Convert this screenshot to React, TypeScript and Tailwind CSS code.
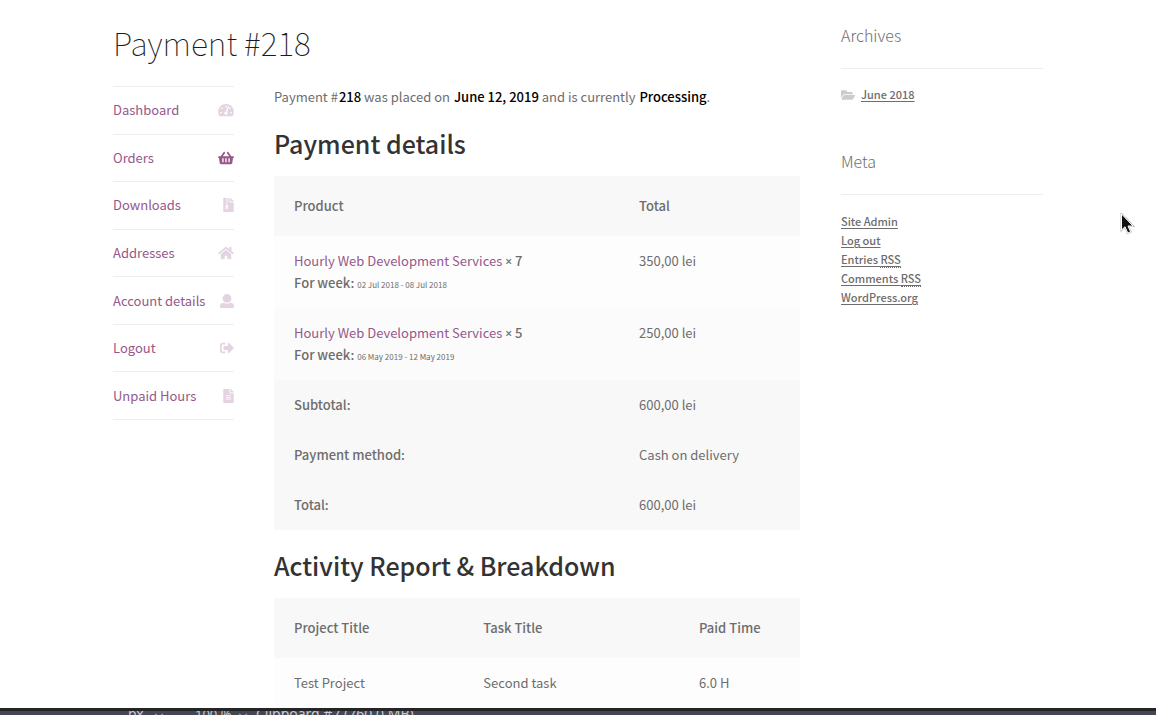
import type { ComponentType } from "react";
import { FaChevronDown, FaFileAlt, FaFileArchive, FaFolderOpen, FaHome, FaShoppingBasket, FaSignOutAlt, FaTachometerAlt } from "react-icons/fa";

function UserIcon({ className }: { className?: string }) {
  return (
    <svg className={className} viewBox="0 0 512 512" fill="currentColor" aria-hidden="true">
      <path d="M256 0c88.366 0 160 71.634 160 160s-71.634 160-160 160S96 248.366 96 160 167.634 0 256 0zm183.283 333.821l-71.313-17.828c-74.923 53.890-165.738 41.864-223.940 0l-71.313 17.828C29.981 344.505 0 382.903 0 426.955V464c0 26.510 21.490 48 48 48h416c26.510 0 48-21.490 48-48v-37.045c0-44.052-29.981-82.450-72.717-93.134z" />
    </svg>
  );
}

type NavItem = { label: string; Icon: ComponentType<{ className?: string }>; look: string };

const navItems: NavItem[] = [
  { label: "Dashboard", Icon: FaTachometerAlt, look: "w-4 opacity-25" },
  { label: "Orders", Icon: FaShoppingBasket, look: "w-4" },
  { label: "Downloads", Icon: FaFileArchive, look: "w-[11px] opacity-25" },
  { label: "Addresses", Icon: FaHome, look: "w-4 opacity-25" },
  { label: "Account details", Icon: UserIcon, look: "w-3.5 opacity-25" },
  { label: "Logout", Icon: FaSignOutAlt, look: "w-3.5 opacity-25" },
  { label: "Unpaid Hours", Icon: FaFileAlt, look: "w-[11px] opacity-25" },
];

const products = [
  { qty: 7, week: "02 Jul 2018 - 08 Jul 2018", total: "350,00 lei", bg: "bg-[#fdfdfd]" },
  { qty: 5, week: "06 May 2019 - 12 May 2019", total: "250,00 lei", bg: "bg-[#fbfbfb]" },
];

const totals = [
  ["Subtotal:", "600,00 lei"],
  ["Payment method:", "Cash on delivery"],
  ["Total:", "600,00 lei"],
];

function AccountNav() {
  return (
    <nav aria-label="Account">
      <ul className="grid h-[334px] auto-rows-fr border-t border-[#eeeeee]">
        {navItems.map(({ label, Icon, look }) => (
          <li key={label} className="border-b border-[#eeeeee]">
            <a href="#" className="flex h-full items-center justify-between whitespace-nowrap text-[#96588a]">
              {label}
              <Icon className={`h-3.5 shrink-0 ${look}`} />
            </a>
          </li>
        ))}
      </ul>
    </nav>
  );
}

function Details() {
  return (
    <table className="w-full table-fixed text-left">
      <thead className="bg-[#f8f8f8]">
        <tr className="h-[60px]">
          <th className="w-[65.6%] px-5 font-medium">Product</th>
          <th className="px-5 font-medium">Total</th>
        </tr>
      </thead>
      <tbody>
        {products.map((p) => (
          <tr key={p.qty} className={p.bg}>
            <td className="px-5 py-3.5 align-top">
              <a href="#" className="text-[#96588a]">Hourly Web Development Services</a>{" "}
              <strong className="font-medium">
                <span className="font-['Open_Sans',sans-serif] text-[12px] leading-none font-semibold">×</span> {p.qty}
              </strong>
              <div>
                <strong className="font-medium">For week:</strong> <span className="text-[8px] leading-none">{p.week}</span>
              </div>
            </td>
            <td className="px-5 py-3.5 align-top">{p.total}</td>
          </tr>
        ))}
      </tbody>
      <tfoot className="bg-[#f8f8f8]">
        {totals.map(([name, value]) => (
          <tr key={name} className="h-[50px]">
            <th className="px-5 font-medium">{name}</th>
            <td className="px-5">{value}</td>
          </tr>
        ))}
      </tfoot>
    </table>
  );
}

function Activity() {
  return (
    <table className="w-full table-fixed text-left">
      <thead className="bg-[#f8f8f8]">
        <tr className="h-[60px]">
          <th className="w-[36%] px-5 font-medium">Project Title</th>
          <th className="w-[41%] px-5 font-medium">Task Title</th>
          <th className="px-5 font-medium">Paid Time</th>
        </tr>
      </thead>
      <tbody>
        <tr className="h-[50px] bg-[#fdfdfd]">
          <td className="px-5">Test Project</td>
          <td className="px-5">Second task</td>
          <td className="px-5">6.0 H</td>
        </tr>
      </tbody>
    </table>
  );
}

function Sidebar() {
  const title = "border-b border-[#eeeeee] text-[16px] leading-6 font-light pb-[21px]";
  const link = "font-medium underline underline-offset-2";
  const abbr = "border-b border-dotted border-[#6d6d6d] no-underline";
  return (
    <aside className="pt-[23px] text-[11px] leading-[19px]">
      <section>
        <h2 className={title}>Archives</h2>
        <ul className="mt-4">
          <li className="flex items-center gap-1.5">
            <FaFolderOpen className="size-3.5 text-[#cccccc]" />
            <a href="#" className={link}>June 2018</a>
          </li>
        </ul>
      </section>
      <section className="mt-[45px]">
        <h2 className={title}>Meta</h2>
        <ul className="mt-[17px]">
          <li><a href="#" className={link}>Site Admin</a></li>
          <li><a href="#" className={link}>Log out</a></li>
          <li><a href="#" className={link}>Entries <abbr className={abbr}>RSS</abbr></a></li>
          <li><a href="#" className={link}>Comments <abbr className={abbr}>RSS</abbr></a></li>
          <li><a href="#" className={link}>WordPress.org</a></li>
        </ul>
      </section>
    </aside>
  );
}

function StatusBar() {
  return (
    <footer className="h-[7px] shrink-0 overflow-hidden border-t-[3px] border-[#252528] bg-linear-to-b from-[#44484a] to-[#43455a] font-['Noto_Sans',sans-serif] text-[14px] leading-[6px] text-[#c8cbd0]">
      <div className="flex pl-32 whitespace-nowrap">
        <span className="w-[26px]">px</span>
        <FaChevronDown className="size-2.5 text-[#8b8e94]" />
        <span className="ml-[31px] w-[43px] text-[13px]">100 %</span>
        <FaChevronDown className="size-2.5 text-[#8b8e94]" />
        <span className="ml-2">Clipboard #7 (760.0 MB)</span>
      </div>
    </footer>
  );
}

export default function App() {
  const key = "font-medium text-black ml-px";
  const h2 = "text-[25px] leading-8 font-medium text-[#333333] mt-[19px] mb-[17px]";
  return (
    <div className="relative flex h-screen flex-col overflow-hidden bg-white font-['Noto_Sans_CJK_SC',sans-serif] text-[13px] leading-[22px] text-[#6d6d6d]">
      <div className="min-h-0 flex-1 overflow-hidden">
        <div className="mx-auto grid max-w-[930px] grid-cols-[687fr_202fr] gap-[41px]">
          <main>
            <h1 className="pt-[18px] text-[32px] leading-[48px] font-thin text-[#1c1c1c]">Payment #218</h1>
            <div className="mt-5 grid grid-cols-[121fr_526fr] items-start gap-10">
              <AccountNav />
              <div>
                <p>
                  Payment #<strong className={key}>218</strong> was placed on <strong className={key}>June 12, 2019</strong> and is currently <strong className={key}>Processing</strong>.
                </p>
                <h2 className={h2}>Payment details</h2>
                <Details />
                <h2 className={h2}>Activity Report &amp; Breakdown</h2>
                <Activity />
              </div>
            </div>
          </main>
          <Sidebar />
        </div>
      </div>
      <StatusBar />
      <svg className="absolute top-[213px] left-[1120px] h-[22px] w-4" viewBox="0 0 16 22" aria-hidden="true">
        <path d="M1.500 1v16l3.500-3.200 2.800 6.200 2.800-1.200-2.600-5.800h5z" fill="none" stroke="#bbbbbb" strokeWidth="2" />
        <path d="M1.500 1v16l3.500-3.200 2.800 6.200 2.800-1.200-2.600-5.800h5z" fill="#111111" stroke="#ffffff" />
      </svg>
    </div>
  );
}
